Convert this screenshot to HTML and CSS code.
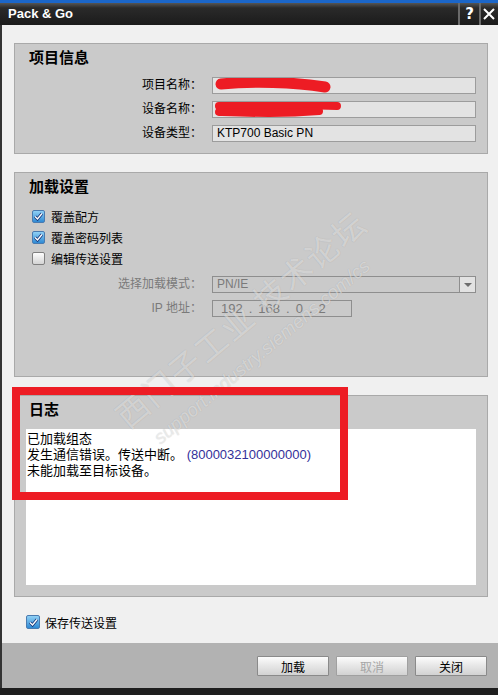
FILE: index.html
```html
<!DOCTYPE html>
<html lang="zh-CN">
<head>
    <meta charset="UTF-8">
    <meta name="viewport" content="width=device-width, initial-scale=1.0">
    <title>Pack &amp; Go</title>
    <link rel="stylesheet" href="styles.css">
</head>
<body>
    <div class="window">
        <div class="titlebar">
            <span class="title">Pack &amp; Go</span>
            <div class="title-buttons">
                <span class="tbtn help">?</span>
                <span class="tbtn close">
                    <svg width="12" height="12" viewBox="0 0 12 12"><path d="M1 1L11 11M11 1L1 11" stroke="#fff" stroke-width="2"/></svg>
                </span>
            </div>
        </div>

        <div class="content">
            <section class="group group-info">
                <h2>项目信息</h2>
                <div class="form">
                    <label>项目名称：</label>
                    <div class="field">
                        <svg class="scribble" width="264" height="17" viewBox="0 0 264 17"><path d="M8 6 C40 3 80 4 112 9" stroke="#ed1c24" stroke-width="11" stroke-linecap="round" fill="none"/></svg>
                    </div>
                    <label>设备名称：</label>
                    <div class="field">
                        <svg class="scribble" width="264" height="17" viewBox="0 0 264 17"><path d="M6 4 C50 2 90 3 124 4" stroke="#ed1c24" stroke-width="8" stroke-linecap="round" fill="none"/><path d="M6 10 C40 11 70 12 106 9" stroke="#ed1c24" stroke-width="8" stroke-linecap="round" fill="none"/></svg>
                    </div>
                    <label>设备类型：</label>
                    <div class="field">KTP700 Basic PN</div>
                </div>
            </section>

            <section class="group group-load">
                <h2>加载设置</h2>
                <div class="checks">
                    <div class="check-row"><span class="check checked"><svg width="11" height="11" viewBox="0 0 11 11"><path d="M2 5.5L4.5 8L9 2.5" stroke="#17377a" stroke-width="3" fill="none"/><path d="M2 5.5L4.5 8L9 2.5" stroke="#fff" stroke-width="1.4" fill="none"/></svg></span>覆盖配方</div>
                    <div class="check-row"><span class="check checked"><svg width="11" height="11" viewBox="0 0 11 11"><path d="M2 5.5L4.5 8L9 2.5" stroke="#17377a" stroke-width="3" fill="none"/><path d="M2 5.5L4.5 8L9 2.5" stroke="#fff" stroke-width="1.4" fill="none"/></svg></span>覆盖密码列表</div>
                    <div class="check-row"><span class="check"></span>编辑传送设置</div>
                </div>
                <div class="form disabled">
                    <label>选择加载模式：</label>
                    <div class="field select">
                        <span>PN/IE</span>
                        <span class="arrow"><svg width="8" height="4" viewBox="0 0 8 4"><path d="M0 0H8L4 4Z" fill="#6d6d6d"/></svg></span>
                    </div>
                    <label>IP 地址：</label>
                    <div class="field ip">
                        <span>192</span><span>.</span><span>168</span><span>.</span><span>0</span><span>.</span><span>2</span>
                    </div>
                </div>
            </section>

            <section class="group group-log">
                <h2>日志</h2>
                <div class="log">
                    <div>已加载组态</div>
                    <div>发生通信错误。传送中断。 <span class="code">(8000032100000000)</span></div>
                    <div>未能加载至目标设备。</div>
                </div>
            </section>

            <div class="check-row save"><span class="check checked"><svg width="11" height="11" viewBox="0 0 11 11"><path d="M2 5.5L4.5 8L9 2.5" stroke="#17377a" stroke-width="3" fill="none"/><path d="M2 5.5L4.5 8L9 2.5" stroke="#fff" stroke-width="1.4" fill="none"/></svg></span>保存传送设置</div>
        </div>

        <div class="footer">
            <button>加载</button>
            <button disabled>取消</button>
            <button>关闭</button>
        </div>
        <div class="bottom-edge"></div>

        <!-- overlays: watermark and the red marker box -->
        <span class="watermark big">西门子工业 技术论坛</span>
        <span class="watermark small">support.industry.siemens.com/cs</span>
        <div class="marker"></div>
    </div>
</body>
</html>
```

FILE: styles.css
```css
body {
    margin: 0;
    font-family: "Liberation Sans", "Noto Sans CJK SC", sans-serif;
    font-size: 12px;
    color: #000;
    background-color: #f0f0f0;
}
.window {
    position: relative;
    width: 498px;
    height: 695px;
    overflow: hidden;
    background-color: #f0f0f0;
}
.titlebar {
    display: flex;
    justify-content: space-between;
    height: 22px;
    border-top: 3px solid #1b66c9;
    background: linear-gradient(#555 0, #2a2a2a 5px, #1b1b1b 100%);
}
.title {
    padding-left: 8px;
    line-height: 22px;
    font-size: 13px;
    font-weight: bold;
    color: #fff;
}
.title-buttons {
    display: flex;
}
.tbtn {
    display: flex;
    align-items: center;
    justify-content: center;
    width: 19px;
    border-left: 2px solid #6a6a6a;
    color: #fff;
    font-size: 15px;
    font-weight: bold;
    font-family: "DejaVu Sans", sans-serif;
}
.tbtn.close {
    width: 16px;
    padding-right: 1px;
}
.content {
    height: 618px;
    box-sizing: border-box;
    padding-top: 18px;
    border-left: 2px solid #333;
}
.group {
    margin: 0 10px 0 12px;
    border: 1px solid #a9a9a9;
    background-color: #cacaca;
    padding-bottom: 11px;
}
.group + .group {
    margin-top: 18px;
}
.group h2 {
    margin: 0;
    padding: 5px 0 0 14px;
    font-size: 15px;
    line-height: 18px;
    font-weight: bold;
}
.form {
    display: grid;
    grid-template-columns: 187px 264px;
    column-gap: 10px;
    row-gap: 7px;
    margin-top: 10px;
}
.form label {
    text-align: right;
    line-height: 17px;
    white-space: nowrap;
}
.field {
    position: relative;
    height: 17px;
    box-sizing: border-box;
    border: 1px solid #9c9c9c;
    background-color: #e3e3e3;
    padding-left: 4px;
    line-height: 15px;
    font-size: 12px;
}
.scribble {
    position: absolute;
    left: 0;
    top: 0;
}
.checks {
    margin: 10px 0 0 17px;
}
.check-row {
    display: flex;
    align-items: center;
    gap: 6px;
    height: 21px;
}
.check {
    display: flex;
    align-items: center;
    justify-content: center;
    width: 13px;
    height: 13px;
    box-sizing: border-box;
    border: 1px solid #808080;
    border-radius: 2px;
    background: linear-gradient(#fdfdfd, #d4d4d4);
}
.check.checked {
    border-color: #4a7bb0;
    background: linear-gradient(#8fd0f5, #2f8ad4);
}
.form.disabled {
    margin-top: 7px;
}
.form.disabled label {
    color: #7a7a7a;
}
.form.disabled .field {
    background-color: #cacaca;
    border-color: #8e8e8e;
    color: #7a7a7a;
}
.field.select {
    display: flex;
    justify-content: space-between;
}
.arrow {
    display: flex;
    align-items: center;
    justify-content: center;
    width: 15px;
    border-left: 1px solid #8e8e8e;
    background-color: #e2e2e2;
}
.field.ip {
    width: 140px;
    display: flex;
    gap: 6px;
    padding-left: 8px;
    font-size: 13px;
}
.group-load {
    height: 205px;
    box-sizing: border-box;
}
.log {
    margin: 10px 0 0 11px;
    width: 450px;
    height: 156px;
    box-sizing: border-box;
    padding: 2px 0 0 1px;
    background-color: #fff;
    font-size: 13px;
    line-height: 16px;
}
.code {
    color: #33309a;
}
.check-row.save {
    margin: 17px 0 0 24px;
    height: 16px;
    gap: 5px;
}
.check-row.save .check {
    width: 14px;
    height: 14px;
}
.footer {
    display: flex;
    justify-content: flex-end;
    gap: 7px;
    height: 45px;
    box-sizing: border-box;
    padding: 13px 11px 0 0;
    border-left: 2px solid #333;
    background-color: #b2b2b2;
}
button {
    width: 72px;
    height: 20px;
    padding: 0;
    border: 1px solid #8a8a8a;
    border-radius: 1px;
    background: linear-gradient(#fcfcfc, #e6e6e6 50%, #d2d2d2);
    font-family: inherit;
    font-size: 12px;
    color: #000;
}
button:disabled {
    color: #a6a6a6;
    border-color: #a0a0a0;
}
.bottom-edge {
    height: 7px;
    background-color: #1e1e1e;
}
.watermark {
    position: absolute;
    transform: translate(-50%, -50%) rotate(-40deg);
    white-space: nowrap;
    pointer-events: none;
    color: rgba(255, 255, 255, 0.5);
    text-shadow: 0 0 1px rgba(0, 0, 0, 0.2);
}
.watermark.big {
    left: 240px;
    top: 318px;
    font-size: 32px;
    font-family: "Noto Sans CJK SC", sans-serif;
    letter-spacing: 2px;
}
.watermark.small {
    left: 262px;
    top: 352px;
    font-size: 19px;
    font-style: italic;
}
.marker {
    position: absolute;
    left: 12px;
    top: 387px;
    width: 336px;
    height: 113px;
    box-sizing: border-box;
    border: 8px solid #ed1c24;
}
```
